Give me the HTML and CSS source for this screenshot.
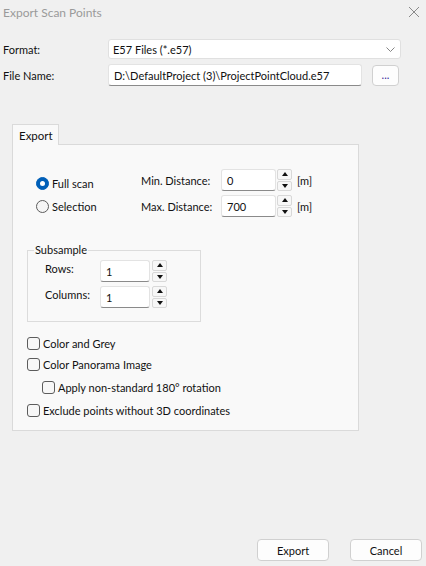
FILE: index.html
```html
<!DOCTYPE html>
<html>
<head>
<meta charset="utf-8">
<link rel="stylesheet" href="styles.css">
</head>
<body>
<div class="dialog">
  <div class="titlebar">
    <span class="title">Export Scan Points</span>
    <svg class="close" width="12" height="12" viewBox="0 0 12 12"><path d="M1 1L11 11M11 1L1 11" stroke="#8a8a8a" stroke-width="1" fill="none"/></svg>
  </div>

  <div class="top-form">
    <div class="row">
      <span class="lbl">Format:</span>
      <div class="combo"><span>E57 Files (*.e57)</span>
        <svg class="chev" width="9" height="5" viewBox="0 0 9 5"><path d="M0.5 0.5L4.5 4.5L8.5 0.5" stroke="#777" fill="none" stroke-width="0.9"/></svg>
      </div>
    </div>
    <div class="row row2">
      <span class="lbl">File Name:</span>
      <div class="textbox path">D:\DefaultProject (3)\ProjectPointCloud.e57</div>
      <div class="btn dots">...</div>
    </div>
  </div>

  <div class="tabs">
    <div class="tab">Export</div>
  </div>
  <div class="panel">
    <div class="scan-area">
      <div class="radios">
        <div class="radio-row"><span class="radio checked"></span>Full scan</div>
        <div class="radio-row"><span class="radio"></span>Selection</div>
      </div>
      <div class="dist-grid">
        <span class="dlbl">Min. Distance:</span>
        <div class="textbox num">0</div>
        <div class="spin"><span class="up"></span><span class="down"></span></div>
        <span class="unit">[m]</span>
        <span class="dlbl">Max. Distance:</span>
        <div class="textbox num">700</div>
        <div class="spin"><span class="up"></span><span class="down"></span></div>
        <span class="unit">[m]</span>
      </div>
    </div>

    <fieldset class="subsample">
      <legend>Subsample</legend>
      <div class="sub-grid">
        <span class="slbl">Rows:</span>
        <div class="textbox snum">1</div>
        <div class="spin"><span class="up"></span><span class="down"></span></div>
        <span class="slbl">Columns:</span>
        <div class="textbox snum">1</div>
        <div class="spin"><span class="up"></span><span class="down"></span></div>
      </div>
    </fieldset>

    <div class="checks">
      <div class="check-row"><span class="check"></span>Color and Grey</div>
      <div class="check-row"><span class="check"></span>Color Panorama Image</div>
      <div class="check-row indent"><span class="check"></span>Apply non-standard 180° rotation</div>
      <div class="check-row"><span class="check"></span>Exclude points without 3D coordinates</div>
    </div>
  </div>

  <div class="footer">
    <div class="btn action">Export</div>
    <div class="btn action">Cancel</div>
  </div>
</div>
</body>
</html>
```

FILE: styles.css
```css
* { box-sizing: border-box; }
html, body { margin: 0; padding: 0; }
body {
  background: #f0f0f0;
  font-family: "Lato", "Noto Sans", sans-serif;
  font-size: 11px;
  color: #111;
  width: 426px;
  height: 566px;
  overflow: hidden;
  white-space: nowrap;
}
.dialog { width: 426px; height: 566px; display: flex; flex-direction: column; }
.titlebar {
  height: 24px;
  display: flex;
  align-items: center;
  justify-content: space-between;
  padding: 0 6px 0 3px;
}
.title { color: #9a9a9a; font-size: 12px; }

.top-form { margin-top: 15px; display: flex; flex-direction: column; gap: 5px; }
.row { display: flex; align-items: center; height: 20px; }
.row2 { height: 22px; }
.lbl { width: 108px; padding-left: 3px; }
.combo {
  width: 293px; height: 20px;
  background: #fff;
  border: 1px solid #e0e0e0;
  border-radius: 3px;
  display: flex; align-items: center; justify-content: space-between;
  padding: 0 4px 0 4px;
}
.chev { margin-right: 1px; margin-top: 1px; }
.textbox {
  background: #fff;
  border: 1px solid #e3e3e3;
  border-bottom: 1px solid #8a8a8a;
  border-radius: 3px;
  display: flex; align-items: center;
  padding-left: 5px;
}
.path { width: 254px; height: 22px; }
.btn {
  background: #fdfdfd;
  border: 1px solid #d0d0d0;
  border-radius: 4px;
  display: flex; align-items: center; justify-content: center;
}
.dots { width: 27px; height: 21px; margin-left: 10px; color: #3a2a9a; padding-bottom: 1px; }

.tabs { margin-top: 38px; padding-left: 12px; display: flex; height: 21px; position: relative; z-index: 1; }
.tab {
  width: 47px; height: 21px;
  background: #f9f9f9;
  border: 1px solid #dadada;
  border-bottom: none;
  padding-left: 6px;
  font-size: 11.5px;
  display: flex; align-items: center;
}
.panel {
  margin-left: 12px; margin-top: -1px;
  width: 347px; height: 287px;
  background: #f9f9f9;
  border: 1px solid #dadada;
  padding-top: 24px;
}
.scan-area { display: flex; padding-left: 23px; }
.radios { width: 105px; display: flex; flex-direction: column; gap: 10px; padding-top: 8px; }
.radio-row { display: flex; align-items: center; height: 13px; gap: 3px; }
.radio {
  width: 13px; height: 13px; border-radius: 50%;
  border: 1px solid #5c5c5c; background: #f5f5f5;
  position: relative;
}
.radio.checked { background: #005fb8; border-color: #005fb8; }
.radio.checked::after {
  content: ""; position: absolute; left: 3px; top: 3px;
  width: 5px; height: 5px; border-radius: 50%; background: #fff;
}
.dist-grid {
  display: grid;
  grid-template-columns: 80px 55px 15px auto;
  grid-auto-rows: 22px;
  row-gap: 4px;
  column-gap: 0;
  align-items: center;
}
.num { width: 55px; height: 22px; }
.spin { margin-left: 2px; width: 15px; height: 22px; display: flex; flex-direction: column; gap: 1px; }
.dist-grid .spin { margin-left: 1px; }
.spin span {
  flex: 1; background: #f7f7f7; border: 1px solid #d8d8d8; border-radius: 2px; position: relative;
}
.spin .up::after, .spin .down::after {
  content: ""; position: absolute; left: 50%; top: 50%; transform: translate(-50%, -50%);
  border-left: 3px solid transparent; border-right: 3px solid transparent;
}
.spin .up::after { border-bottom: 4px solid #111; }
.spin .down::after { border-top: 4px solid #111; }
.unit { margin-left: 6px; }

.subsample {
  margin: 27px 0 0 14px;
  width: 174px; height: 78px;
  border: 1px solid #dcdcdc;
  padding: 0;
}
.subsample legend { padding: 0 1px; margin-left: 6px; line-height: 12px; }
.sub-grid {
  display: grid;
  grid-template-columns: 55px 50px 17px;
  grid-auto-rows: 22px;
  row-gap: 4px;
  align-items: center;
  margin: 4px 0 0 17px;
}
.slbl { padding-bottom: 5px; }
.snum { width: 50px; height: 22px; }

.checks { margin-top: 15px; padding-left: 14px; display: flex; flex-direction: column; gap: 8px; }
.check-row { display: flex; align-items: center; height: 13px; gap: 3px; }
.check-row.indent { padding-left: 15px; margin-top: 2px; margin-bottom: 2px; }
.check {
  width: 13px; height: 13px; border: 1px solid #5c5c5c; border-radius: 3px; background: #f7f7f7;
}

.footer { margin-top: auto; display: flex; justify-content: flex-end; gap: 21px; padding: 0 4px 5px 0; }
.action { width: 72px; height: 22px; }
```
